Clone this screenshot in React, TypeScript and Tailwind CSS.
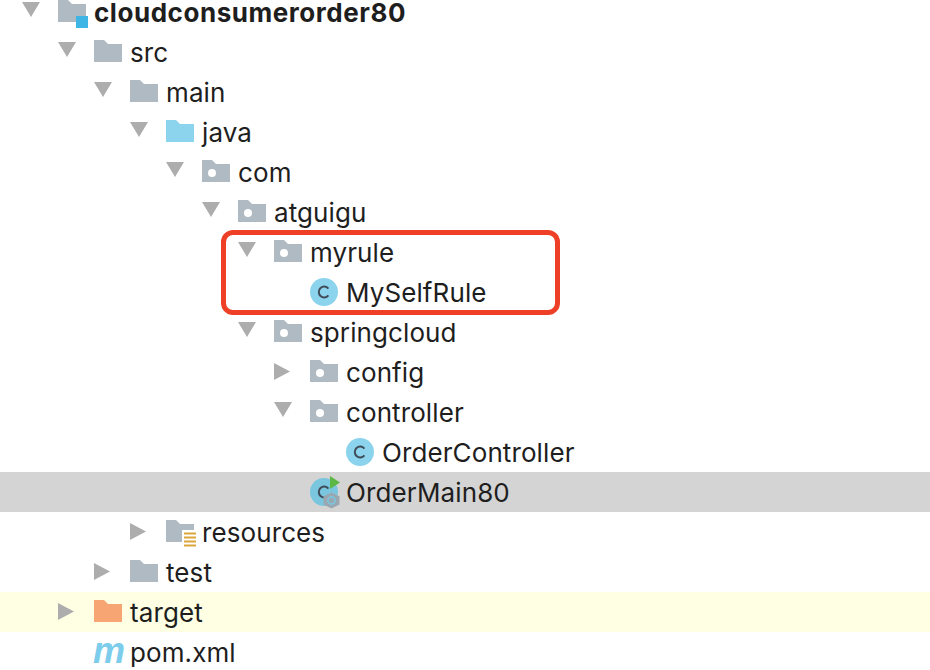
type IconName = 'module' | 'folder' | 'source' | 'package' | 'excluded' | 'resources' | 'class' | 'main' | 'maven';

type Row = {
  label: string;
  level: number;
  icon: IconName;
  arrow?: 'down' | 'right';
  bold?: boolean;
  bg?: string;
};

const rows: Row[] = [
  { label: 'cloudconsumerorder80', level: 0, icon: 'module', arrow: 'down', bold: true },
  { label: 'src', level: 1, icon: 'folder', arrow: 'down' },
  { label: 'main', level: 2, icon: 'folder', arrow: 'down' },
  { label: 'java', level: 3, icon: 'source', arrow: 'down' },
  { label: 'com', level: 4, icon: 'package', arrow: 'down' },
  { label: 'atguigu', level: 5, icon: 'package', arrow: 'down' },
  { label: 'myrule', level: 6, icon: 'package', arrow: 'down' },
  { label: 'MySelfRule', level: 7, icon: 'class' },
  { label: 'springcloud', level: 6, icon: 'package', arrow: 'down' },
  { label: 'config', level: 7, icon: 'package', arrow: 'right' },
  { label: 'controller', level: 7, icon: 'package', arrow: 'down' },
  { label: 'OrderController', level: 8, icon: 'class' },
  { label: 'OrderMain80', level: 7, icon: 'main', bg: 'bg-[#d4d4d4]' },
  { label: 'resources', level: 3, icon: 'resources', arrow: 'right' },
  { label: 'test', level: 2, icon: 'folder', arrow: 'right' },
  { label: 'target', level: 1, icon: 'excluded', arrow: 'right', bg: 'bg-[#ffffe4]' },
  { label: 'pom.xml', level: 1, icon: 'maven' },
];

const indents = ['pl-[22px]', 'pl-[58px]', 'pl-[94px]', 'pl-[130px]', 'pl-[166px]', 'pl-[202px]', 'pl-[238px]', 'pl-[274px]', 'pl-[310px]'];

const folderPath = 'M0 2H10L14 6H28V24H0Z';

function Arrow({ dir }: { dir?: 'down' | 'right' }) {
  return (
    <svg className="w-9 h-7 shrink-0" viewBox="0 0 36 28">
      {dir === 'down' && <path d="M0 4H18L9 19Z" fill="#adadad" />}
      {dir === 'right' && <path d="M0 5L16 13.5L0 22Z" fill="#adadad" />}
    </svg>
  );
}

function ClassBadge({ fill }: { fill: string }) {
  return (
    <>
      <circle cx="14" cy="14" r="14" fill={fill} />
      <path d="M18.4 10.6A5.4 5.4 0 1 0 18.4 17.4" fill="none" stroke="#3f4c57" strokeWidth="2" />
    </>
  );
}

function NodeIcon({ name }: { name: IconName }) {
  if (name === 'maven') {
    return (
      <span className="w-9 h-7 shrink-0 flex items-center font-['Liberation_Sans',sans-serif] italic font-bold text-[36px] leading-7 text-[#7ccdeb] -translate-x-[1px] -translate-y-[1px]">
        m
      </span>
    );
  }
  return (
    <svg className="w-9 h-7 shrink-0 overflow-visible" viewBox="0 0 36 28">
      {name === 'module' && (
        <>
          <path d={folderPath} fill="#afbac2" />
          <rect x="18" y="18" width="12" height="12" fill="#3fb5e5" />
        </>
      )}
      {name === 'folder' && <path d={folderPath} fill="#afbac2" />}
      {name === 'source' && <path d={folderPath} fill="#8cd4ee" />}
      {name === 'excluded' && <path d={folderPath} fill="#f7a673" />}
      {name === 'package' && (
        <>
          <path d={folderPath} fill="#afbac2" />
          <circle cx="10" cy="15" r="4" fill="#fff" />
        </>
      )}
      {name === 'resources' && (
        <>
          <path d={folderPath} fill="#afbac2" />
          <rect x="16" y="12" width="14" height="18" fill="#fff" />
          <path d="M18 15.5H30M18 19.5H30M18 23.5H30M18 27.5H30" stroke="#dba63c" strokeWidth="2" />
        </>
      )}
      {name === 'class' && <ClassBadge fill="#8cd4ee" />}
      {name === 'main' && (
        <>
          <ClassBadge fill="#7ac6df" />
          <path d="M20 -2L30 4.5L20 11Z" fill="#5cb745" />
          <path d="M21.5 14.5L29.5 18.5V26.5L21.5 30.5L13.5 26.5V18.5Z" fill="#9aa7b0" />
          <circle cx="21.5" cy="22.5" r="3.6" fill="none" stroke="#7ac6df" strokeWidth="1.6" />
        </>
      )}
    </svg>
  );
}

export default function App() {
  return (
    <div className="h-[670px] overflow-hidden bg-white font-['Inter','Liberation_Sans',sans-serif] text-[#1e1e1e] text-[26px]">
      <div className="relative -mt-2">
        {rows.map((row) => (
          <div key={row.label} className={`h-10 flex items-center ${indents[row.level]} ${row.bg ?? ''}`}>
            <Arrow dir={row.arrow} />
            <NodeIcon name={row.icon} />
            <span className={`pt-[2px] leading-[22px] ${row.bold ? 'font-bold tracking-[0.55px]' : 'tracking-[0.1px]'}`}>{row.label}</span>
          </div>
        ))}
        {/* red annotation round myrule */}
        <div className="absolute left-[221px] top-[238px] w-[339px] h-[85px] border-[5px] border-[#ee4026] rounded-[12px]" />
      </div>
    </div>
  );
}
